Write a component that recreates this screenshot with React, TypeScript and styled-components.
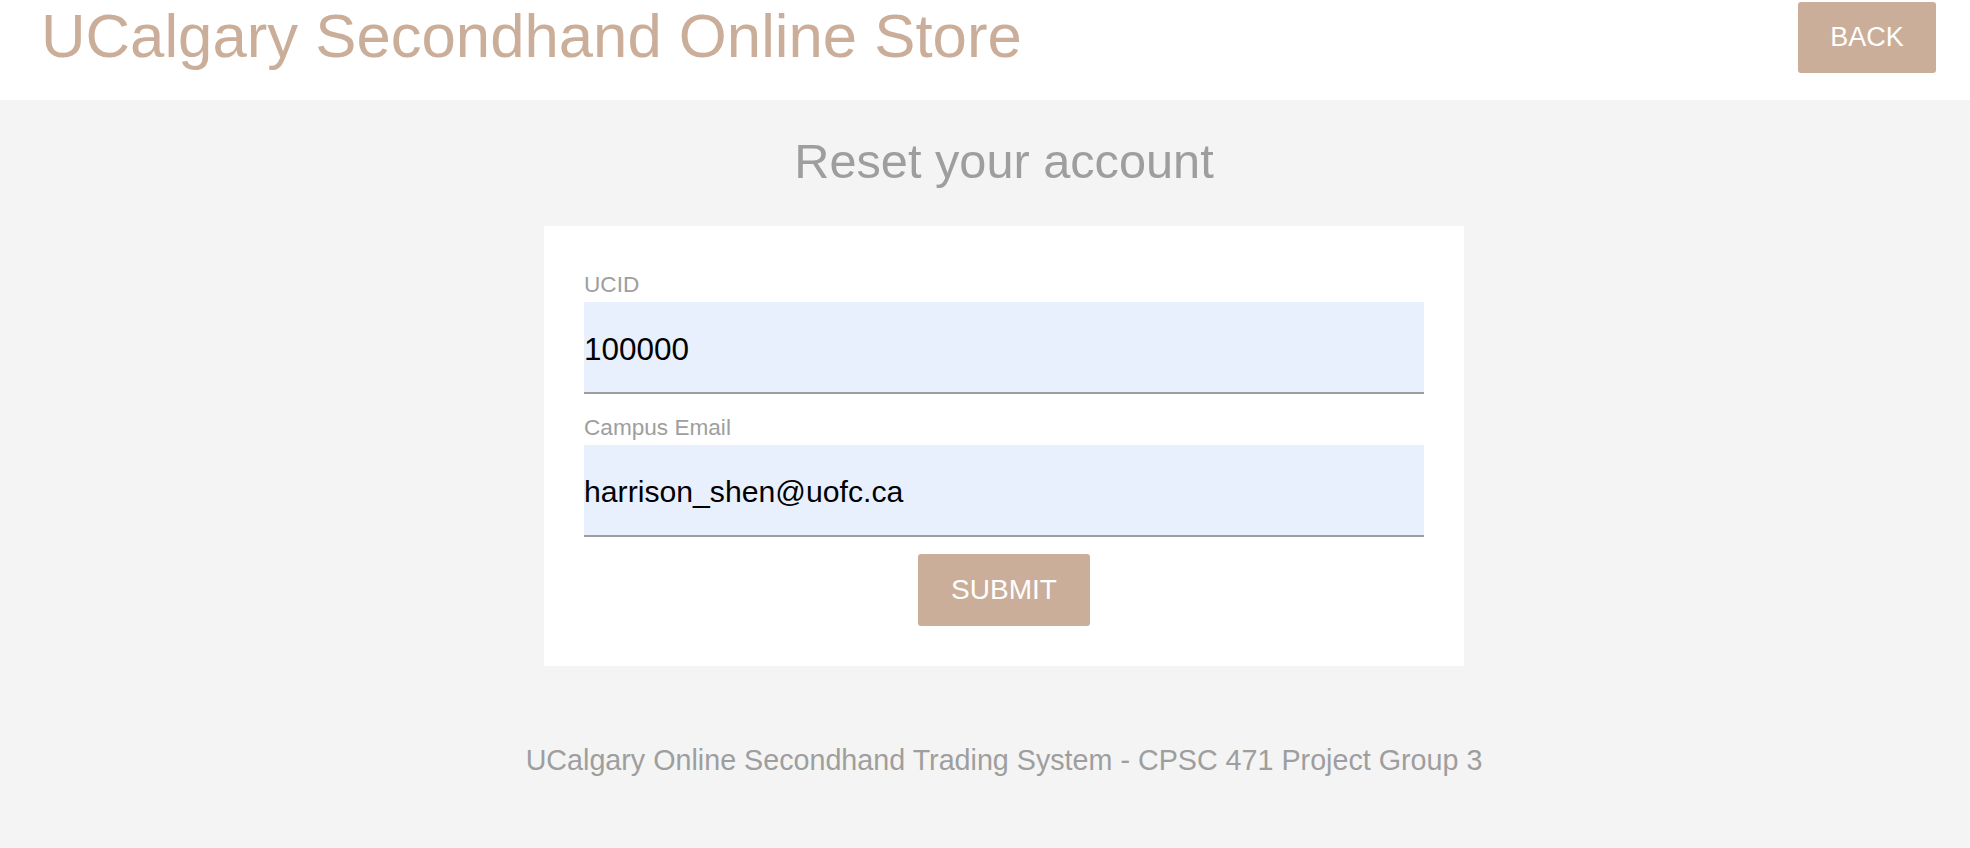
import React from "react";
import styled, { createGlobalStyle } from "styled-components";

const GlobalStyle = createGlobalStyle`
  html, body {
    margin: 0;
    padding: 0;
    background: #f4f4f4;
    font-family: "Liberation Sans", Arial, sans-serif;
  }
  * { box-sizing: border-box; }
`;

const TAN = "#cbae99";
const GRAY = "#9e9e9e";

const Page = styled.div`
  display: flex;
  flex-direction: column;
  width: 1970px;
  min-height: 848px;
`;

const Header = styled.header`
  display: flex;
  justify-content: space-between;
  align-items: flex-start;
  height: 100px;
  padding: 1px 34px 0 41px;
  background: #ffffff;
`;

const Brand = styled.h1`
  margin: 0;
  font-family: "Liberation Sans", Arial, sans-serif;
  font-weight: 400;
  font-size: 61.7px;
  line-height: 70px;
  color: ${TAN};
  white-space: nowrap;
`;

const TanButton = styled.button<{ $size: number; $width: number }>`
  display: inline-flex;
  align-items: center;
  justify-content: center;
  width: ${(p) => p.$width}px;
  height: 72px;
  margin: 0;
  padding: 0;
  border: none;
  border-radius: 3px;
  background: ${TAN};
  color: #ffffff;
  font-family: "Liberation Sans", Arial, sans-serif;
  font-size: ${(p) => p.$size}px;
  font-weight: 400;
  text-transform: uppercase;
  cursor: pointer;
`;

const BackButton = styled(TanButton)`
  margin-top: 1px;
  height: 71px;
`;

const Main = styled.main`
  flex: 1;
  display: flex;
  flex-direction: column;
  align-items: center;
  padding: 33px 0 0 38px;
`;

const Title = styled.h2`
  margin: 0;
  font-family: "Liberation Sans", Arial, sans-serif;
  font-weight: 400;
  font-size: 48.7px;
  line-height: 56px;
  color: ${GRAY};
`;

const Card = styled.form`
  display: flex;
  flex-direction: column;
  width: 920px;
  margin-top: 37px;
  padding: 44px 40px 40px;
  background: #ffffff;
`;

const Field = styled.div<{ $gap: number }>`
  display: flex;
  flex-direction: column;
  margin-top: ${(p) => p.$gap}px;
`;

const Label = styled.label`
  font-family: "Liberation Sans", Arial, sans-serif;
  font-size: 22.6px;
  line-height: 30px;
  color: ${GRAY};
  margin-bottom: 2px;
`;

const Input = styled.input<{ $size: number }>`
  width: 100%;
  height: 92px;
  margin: 0;
  padding: 4px 0 0 0;
  border: none;
  border-bottom: 2px solid ${GRAY};
  border-radius: 0;
  background: #e8f0fe;
  color: #000000;
  font-family: "Liberation Sans", Arial, sans-serif;
  font-size: ${(p) => p.$size}px;
  outline: none;
`;

const Actions = styled.div`
  display: flex;
  justify-content: center;
  margin-top: 17px;
`;

const Footer = styled.footer`
  margin-top: 77px;
  font-family: "Liberation Sans", Arial, sans-serif;
  font-size: 28.7px;
  line-height: 34px;
  color: ${GRAY};
  white-space: nowrap;
`;

export default function App() {
  return (
    <>
      <GlobalStyle />
      <Page>
        <Header>
          <Brand>UCalgary Secondhand Online Store</Brand>
          <BackButton type="button" $size={27} $width={138}>
            Back
          </BackButton>
        </Header>
        <Main>
          <Title>Reset your account</Title>
          <Card onSubmit={(e) => e.preventDefault()}>
            <Field $gap={0}>
              <Label htmlFor="ucid">UCID</Label>
              <Input id="ucid" type="text" $size={31.5} defaultValue="100000" />
            </Field>
            <Field $gap={19}>
              <Label htmlFor="email">Campus Email</Label>
              <Input id="email" type="email" $size={30.2} defaultValue="harrison_shen@uofc.ca" />
            </Field>
            <Actions>
              <TanButton type="submit" $size={28} $width={172}>
                Submit
              </TanButton>
            </Actions>
          </Card>
          <Footer>UCalgary Online Secondhand Trading System - CPSC 471 Project Group 3</Footer>
        </Main>
      </Page>
    </>
  );
}
